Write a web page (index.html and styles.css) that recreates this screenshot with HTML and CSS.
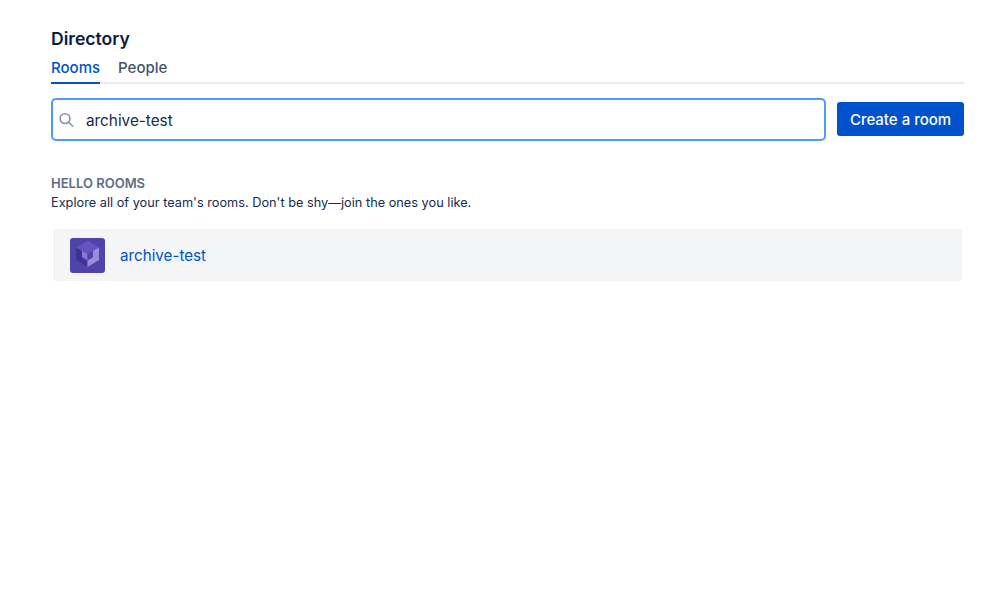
FILE: index.html
```html
<!DOCTYPE html>
<html lang="en">
<head>
<meta charset="utf-8">
<title>Directory</title>
<link rel="stylesheet" href="styles.css">
</head>
<body>
<main class="page">
  <h1 class="title">Directory</h1>
  <nav class="tabs">
    <a class="tab tab-active">Rooms</a>
    <a class="tab">People</a>
  </nav>
  <div class="search-row">
    <div class="search">
      <svg class="search-icon" width="16" height="16" viewBox="0 0 16 16" fill="none" stroke="#8993a4" stroke-width="1.6"><circle cx="6" cy="6.6" r="4.9"/><path d="M9.7 10.3l4 4" stroke-linecap="round"/></svg>
      <span class="search-text">archive-test</span>
    </div>
    <button class="create">Create a room</button>
  </div>
  <section class="intro">
    <h2 class="intro-head">HELLO ROOMS</h2>
    <p class="intro-text">Explore all of your team's rooms. Don't be shy—join the ones you like.</p>
  </section>
  <div class="room">
    <svg class="avatar" width="35" height="35" viewBox="0 0 35 35">
      <rect width="35" height="35" rx="3" fill="#5243aa"/>
      <path d="M17.5 3L29 9.5V22L17.5 29L6 22V9.5Z" fill="#6554c0"/>
      <path d="M6 9.5L12 13V19L17.5 22.5V29L6 22Z" fill="#403294"/>
      <path d="M29 9.5V22L17.5 29V22.5L23 19V13Z" fill="#998dd9"/>
      <path d="M12 13L17.5 16V22.5L12 19Z" fill="#8777d9"/>
      <path d="M23 13L17.5 16V22.5L23 19Z" fill="#5243aa"/>
    </svg>
    <a class="room-name">archive-test</a>
  </div>
</main>
</body>
</html>
```
FILE: styles.css
```css
* { box-sizing: border-box; }
html, body { margin: 0; padding: 0; background: #fff; }
body { font-family: Inter, "Liberation Sans", sans-serif; color: #172b4d; }
.page { width: 999px; height: 616px; padding: 28px 35px 0 51px; }
.title { margin: 0; font-size: 17.6px; line-height: 21px; font-weight: 600; color: #091e42; }
.tabs { display: flex; gap: 18px; margin-top: 7px; border-bottom: 2px solid #ebecf0; height: 28px; }
.tab { font-size: 15px; line-height: 24px; height: 28px; font-weight: 500; color: #42526e; }
.tab-active { color: #0052cc; border-bottom: 2px solid #0052cc; }
.search-row { display: flex; align-items: flex-start; gap: 11px; margin-top: 14px; }
.search { flex: 1; height: 43px; display: flex; align-items: center; border: 2px solid #4c9aff; border-radius: 5px; padding-left: 6px; }
.search-icon { flex: none; }
.search-text { margin-left: 11px; padding-top: 1px; font-size: 15.3px; color: #172b4d; }
.create { width: 127px; height: 34px; margin-top: 4px; border: 0; border-radius: 3px; background: #0052cc; color: #fff; font: 500 15px Inter, "Liberation Sans", sans-serif; padding: 0; }
.intro { margin-top: 34px; }
.intro-head { margin: 0; font-size: 13px; line-height: 16px; font-weight: 600; color: #5e6c84; }
.intro-text { margin: 3px 0 0; font-size: 12.75px; line-height: 17px; color: #172b4d; }
.room { display: flex; align-items: center; margin: 18px 2px 0; height: 52px; padding-left: 17px; background: #f4f5f7; border-radius: 3px; }
.avatar { flex: none; }
.room-name { margin-left: 15px; padding-top: 1px; font-size: 15.2px; color: #0052cc; }
```
